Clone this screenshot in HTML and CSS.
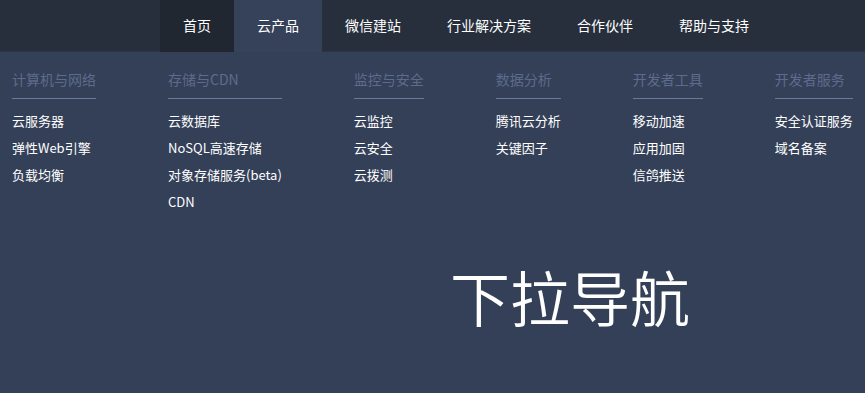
FILE: index.html
```html
<!DOCTYPE html>
<html lang="zh-CN">
<head>
<meta charset="utf-8">
<title>下拉导航</title>
<link rel="stylesheet" href="styles.css">
</head>
<body>
<header class="topbar">
  <nav class="nav">
    <a class="nav-item is-home" href="#">首页</a>
    <a class="nav-item is-open" href="#">云产品</a>
    <a class="nav-item" href="#">微信建站</a>
    <a class="nav-item" href="#">行业解决方案</a>
    <a class="nav-item" href="#">合作伙伴</a>
    <a class="nav-item" href="#">帮助与支持</a>
  </nav>
</header>
<section class="dropdown">
  <div class="col">
    <h3 class="col-title">计算机与网络</h3>
    <ul class="col-list">
      <li>云服务器</li>
      <li>弹性Web引擎</li>
      <li>负载均衡</li>
    </ul>
  </div>
  <div class="col">
    <h3 class="col-title">存储与CDN</h3>
    <ul class="col-list">
      <li>云数据库</li>
      <li>NoSQL高速存储</li>
      <li>对象存储服务(beta)</li>
      <li>CDN</li>
    </ul>
  </div>
  <div class="col">
    <h3 class="col-title">监控与安全</h3>
    <ul class="col-list">
      <li>云监控</li>
      <li>云安全</li>
      <li>云拨测</li>
    </ul>
  </div>
  <div class="col">
    <h3 class="col-title">数据分析</h3>
    <ul class="col-list">
      <li>腾讯云分析</li>
      <li>关键因子</li>
    </ul>
  </div>
  <div class="col">
    <h3 class="col-title">开发者工具</h3>
    <ul class="col-list">
      <li>移动加速</li>
      <li>应用加固</li>
      <li>信鸽推送</li>
    </ul>
  </div>
  <div class="col">
    <h3 class="col-title">开发者服务</h3>
    <ul class="col-list">
      <li>安全认证服务</li>
      <li>域名备案</li>
    </ul>
  </div>
</section>
<main class="hero">
  <h1 class="hero-title">下拉导航</h1>
</main>
</body>
</html>
```
FILE: styles.css
```css
* { box-sizing: border-box; }
html, body { height: 100%; }
body {
  margin: 0;
  background: #344058;
  color: #ffffff;
  font-family: "Noto Sans CJK SC", "Noto Sans", sans-serif;
  overflow: hidden;
}
.topbar {
  height: 52px;
  background: #272f3d;
  border-bottom: 1px solid #2d3646;
}
.nav {
  display: flex;
  height: 52px;
  padding-left: 160px;
}
.nav-item {
  display: block;
  padding: 0 23px;
  line-height: 51px;
  font-size: 14px;
  color: #ffffff;
  text-decoration: none;
}
.nav-item.is-home { background: #202731; }
.nav-item.is-open { background: #36415a; }
.dropdown {
  display: flex;
  gap: 72px;
  padding: 17px 0 0 12px;
}
.col { display: flex; flex-direction: column; }
.col-title {
  margin: 0;
  font-size: 14px;
  font-weight: 400;
  line-height: 20px;
  color: #5d6b8c;
  padding-bottom: 9px;
  border-bottom: 1px solid #6a789a;
  white-space: nowrap;
}
.col-list {
  list-style: none;
  margin: 0;
  padding: 8px 0 0;
}
.col-list li {
  font-size: 13px;
  line-height: 27px;
  color: #ffffff;
  white-space: nowrap;
}
.hero {
  padding: 51px 0 0 450px;
}
.hero-title {
  margin: 0;
  font-size: 60px;
  font-weight: 350;
  line-height: 60px;
  white-space: nowrap;
}
```
